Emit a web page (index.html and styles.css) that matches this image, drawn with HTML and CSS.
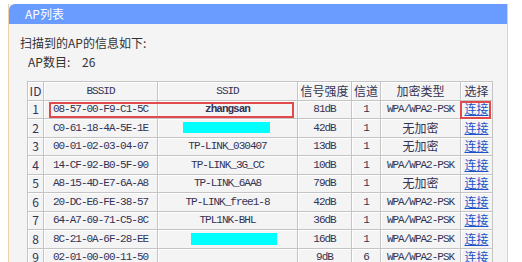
FILE: index.html
```html
<!DOCTYPE html>
<html lang="zh-CN">
<head>
    <meta charset="UTF-8">
    <title>AP列表</title>
    <link rel="stylesheet" href="styles.css">
</head>
<body>
    <div class="panel">
        <div class="panel-head">AP列表</div>
        <div class="panel-body">
            <div class="intro">扫描到的AP的信息如下:</div>
            <div class="count"><span class="count-label">AP数目:</span><span>26</span></div>
            <div class="table-wrap">
                <table class="ap-table">
                    <colgroup>
                        <col style="width:16px">
                        <col style="width:114px">
                        <col style="width:140px">
                        <col style="width:54px">
                        <col style="width:29px">
                        <col style="width:80px">
                        <col style="width:32px">
                    </colgroup>
                    <tr class="head">
                        <th>ID</th><th class="mono">BSSID</th><th class="mono">SSID</th><th>信号强度</th><th>信道</th><th>加密类型</th><th>选择</th>
                    </tr>
                    <tr>
                        <td>1</td><td class="mono">08-57-00-F9-C1-5C</td><td class="mono bold">zhangsan</td><td class="mono">81dB</td><td class="mono">1</td><td class="mono">WPA/WPA2-PSK</td><td><a href="#">连接</a></td>
                    </tr>
                    <tr>
                        <td>2</td><td class="mono">C0-61-18-4A-5E-1E</td><td class="mono"><span class="hide hide-a"></span></td><td class="mono">42dB</td><td class="mono">1</td><td>无加密</td><td><a href="#">连接</a></td>
                    </tr>
                    <tr>
                        <td>3</td><td class="mono">00-01-02-03-04-07</td><td class="mono">TP-LINK_030407</td><td class="mono">13dB</td><td class="mono">1</td><td>无加密</td><td><a href="#">连接</a></td>
                    </tr>
                    <tr>
                        <td>4</td><td class="mono">14-CF-92-B0-5F-90</td><td class="mono">TP-LINK_3G_CC</td><td class="mono">10dB</td><td class="mono">1</td><td class="mono">WPA/WPA2-PSK</td><td><a href="#">连接</a></td>
                    </tr>
                    <tr>
                        <td>5</td><td class="mono">A8-15-4D-E7-6A-A8</td><td class="mono">TP-LINK_6AA8</td><td class="mono">79dB</td><td class="mono">1</td><td>无加密</td><td><a href="#">连接</a></td>
                    </tr>
                    <tr>
                        <td>6</td><td class="mono">20-DC-E6-FE-38-57</td><td class="mono">TP-LINK_free1-8</td><td class="mono">42dB</td><td class="mono">1</td><td class="mono">WPA/WPA2-PSK</td><td><a href="#">连接</a></td>
                    </tr>
                    <tr>
                        <td>7</td><td class="mono">64-A7-69-71-C5-8C</td><td class="mono">TPL1NK-BHL</td><td class="mono">36dB</td><td class="mono">1</td><td class="mono">WPA/WPA2-PSK</td><td><a href="#">连接</a></td>
                    </tr>
                    <tr>
                        <td>8</td><td class="mono">8C-21-0A-6F-28-EE</td><td class="mono"><span class="hide hide-b"></span></td><td class="mono">16dB</td><td class="mono">1</td><td class="mono">WPA/WPA2-PSK</td><td><a href="#">连接</a></td>
                    </tr>
                    <tr>
                        <td>9</td><td class="mono">02-01-00-00-11-50</td><td class="mono"></td><td class="mono">9dB</td><td class="mono">6</td><td class="mono">WPA/WPA2-PSK</td><td><a href="#">连接</a></td>
                    </tr>
                </table>
                <div class="mark mark-row"></div>
                <div class="mark mark-link"></div>
            </div>
        </div>
    </div>
</body>
</html>
```

FILE: styles.css
```css
body {
    margin: 0;
    background-color: #ffffff;
    font-family: "Noto Sans CJK SC", sans-serif;
    font-size: 12px;
    color: #333333;
    height: 262px;
    overflow: hidden;
}
.panel {
    margin: 4px 14px 0 8px;
    border-left: 1px solid #ead2ae;
    border-right: 1px solid #ead2ae;
    background-color: #f4f4f4;
    height: 300px;
}
.panel-head {
    background-color: #6a9cff;
    color: #ffffff;
    height: 20px;
    line-height: 20px;
    padding-left: 16px;
    border-radius: 6px 0 0 0;
    font-size: 12px;
}
.panel-body {
    padding: 11px 0 0 11px;
}
.intro {
    height: 16px;
    line-height: 16px;
}
.count {
    margin-top: 3px;
    padding-left: 8px;
    height: 16px;
    line-height: 16px;
}
.count-label {
    display: inline-block;
    width: 54px;
}
.table-wrap {
    position: relative;
    margin: 11px 0 0 7px;
    width: 465px;
}
.ap-table {
    border-collapse: collapse;
    table-layout: fixed;
    width: 465px;
}
.ap-table th,
.ap-table td {
    border: 1px solid #c4c4c4;
    box-shadow: inset 1px 1px 0 #ffffff;
    height: 17.5px;
    padding: 0;
    text-align: center;
    font-weight: normal;
    font-size: 12px;
    line-height: 14px;
    color: #333355;
    white-space: nowrap;
    overflow: hidden;
}
.ap-table .mono {
    font-family: "Liberation Mono", monospace;
    font-size: 11px;
    letter-spacing: -1px;
}
.ap-table .bold {
    font-weight: bold;
}
.ap-table a {
    color: #1c52c8;
    text-decoration: underline;
}
.hide {
    display: inline-block;
    vertical-align: middle;
    background-color: #00ffff;
}
.hide-a {
    width: 87px;
    height: 11px;
    margin-right: 2px;
}
.hide-b {
    width: 86px;
    height: 12px;
    margin-left: 12px;
}
.mark {
    position: absolute;
    border: 2px solid #e04a4a;
    box-sizing: border-box;
}
.mark-row {
    left: 22px;
    top: 21px;
    width: 245px;
    height: 16px;
}
.mark-link {
    left: 433px;
    top: 20px;
    width: 31px;
    height: 18px;
}
```
